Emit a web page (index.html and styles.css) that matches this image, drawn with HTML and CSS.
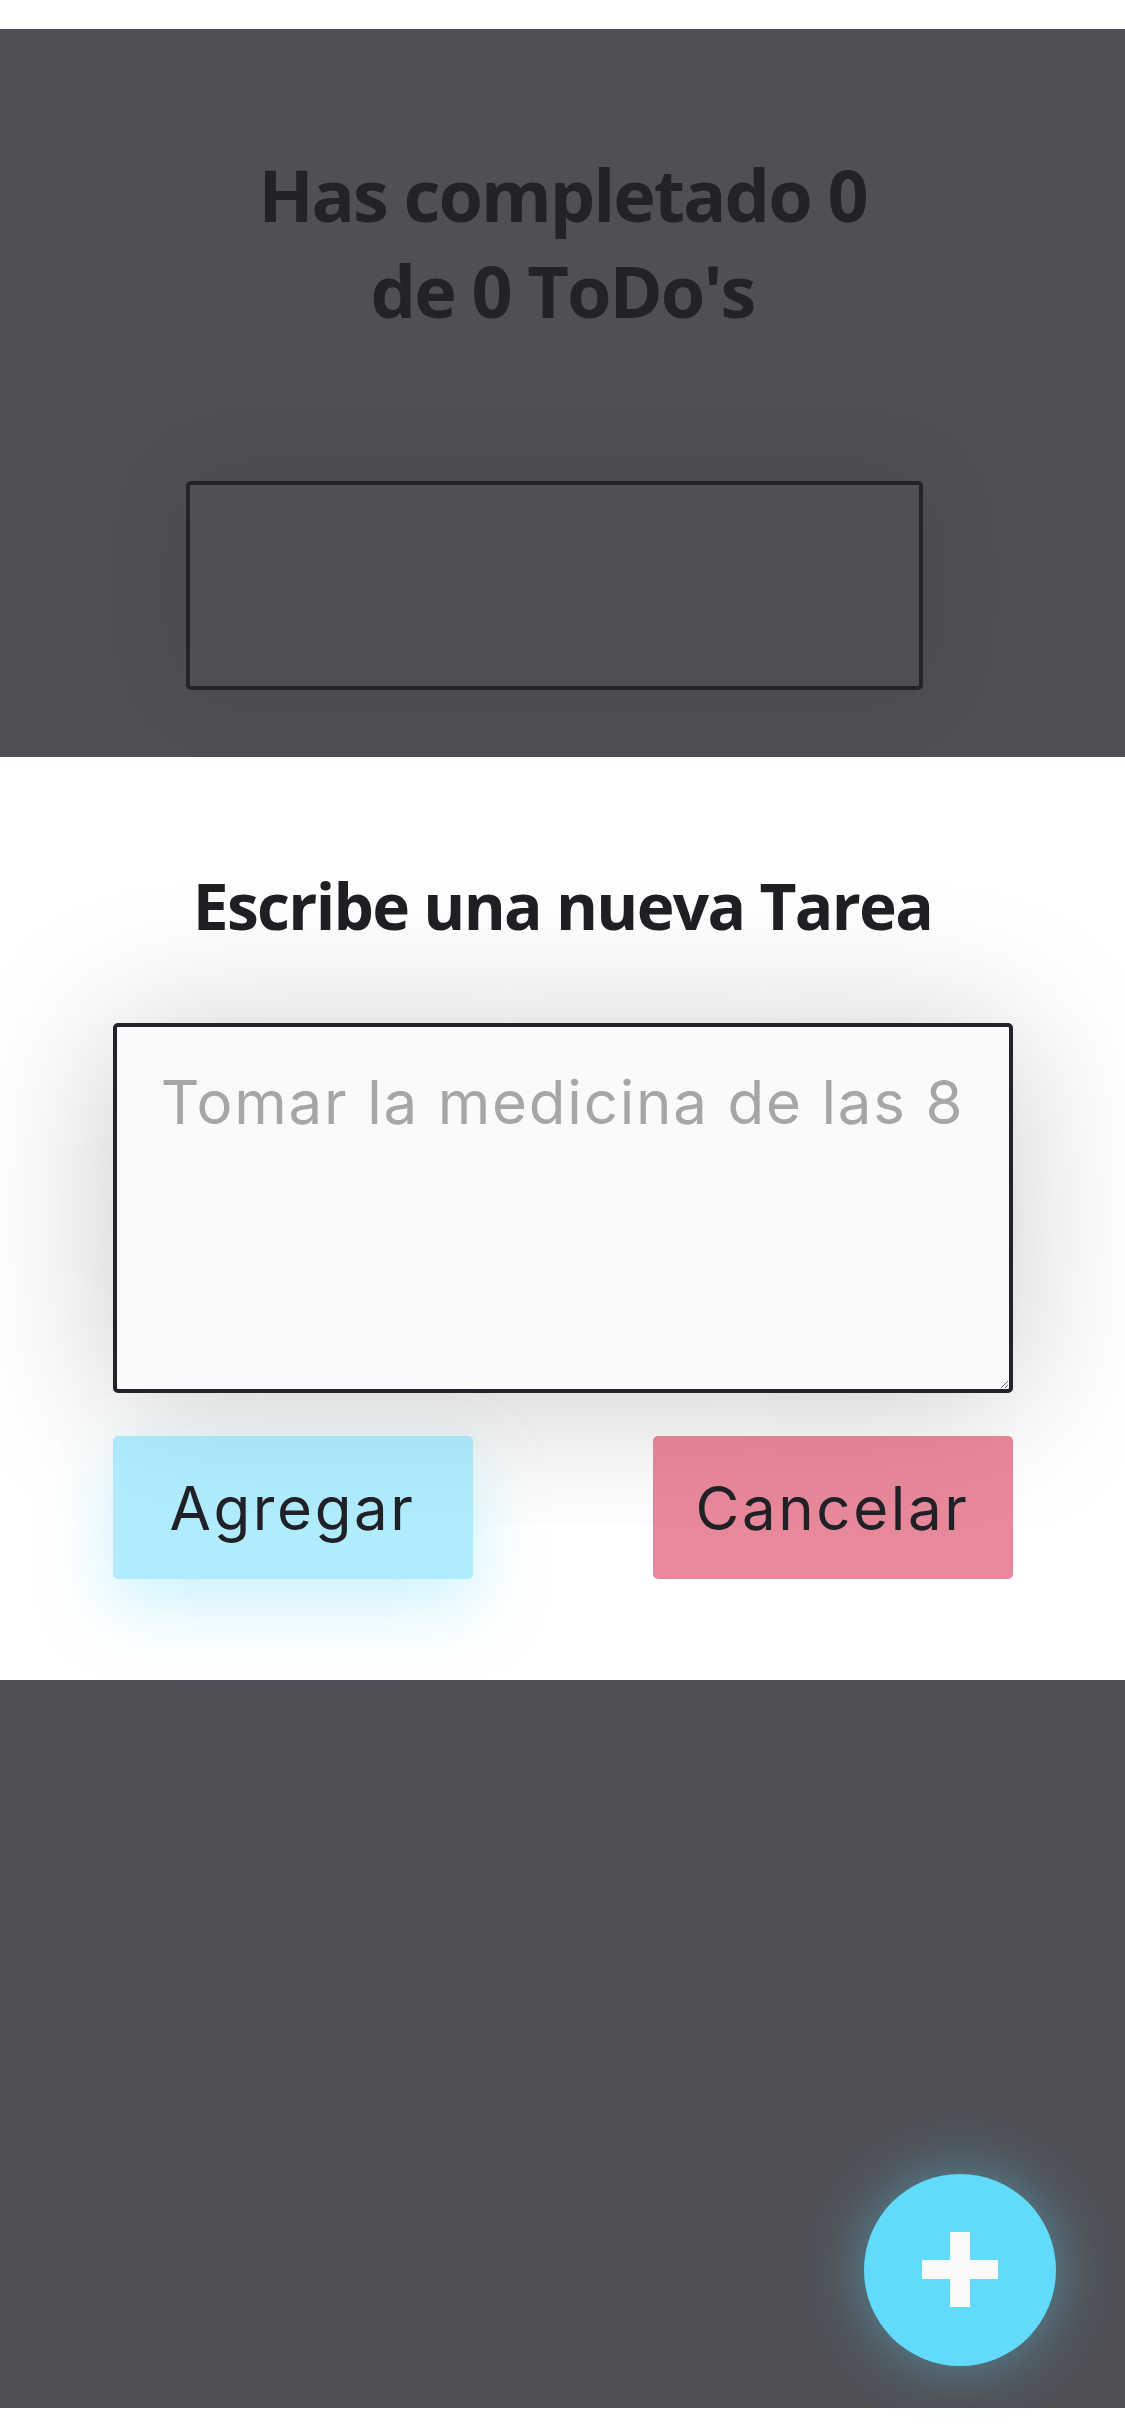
FILE: index.html
```html
<!DOCTYPE html>
<html lang="es">
<head>
<meta charset="utf-8">
<title>ToDo's</title>
<link rel="stylesheet" href="styles.css">
</head>
<body>
<div class="screen">
  <div class="strip"></div>
  <section class="backdrop backdrop-top">
    <h1 class="counter">Has completado 0<br>de 0 ToDo's</h1>
    <div class="search-box"></div>
  </section>
  <section class="modal">
    <h2 class="modal-title">Escribe una nueva Tarea</h2>
    <textarea class="task-input" placeholder="Tomar la medicina de las 8"></textarea>
    <div class="actions">
      <button class="btn btn-add" type="button">Agregar</button>
      <button class="btn btn-cancel" type="button">Cancelar</button>
    </div>
  </section>
  <section class="backdrop backdrop-bottom"></section>
  <div class="strip strip-bottom"></div>
  <button class="fab" type="button" aria-label="Agregar tarea">
    <svg width="76" height="76" viewBox="0 0 76 76"><rect x="28" y="0" width="20" height="75" fill="#fafafa"/><rect x="0" y="28" width="76" height="19" fill="#fafafa"/></svg>
  </button>
</div>
</body>
</html>
```
FILE: styles.css
```css
html, body {
  margin: 0;
  padding: 0;
  background: #ffffff;
}

.screen {
  position: relative;
  width: 1125px;
  height: 2436px;
  overflow: hidden;
}

.strip {
  height: 29px;
  background: #ffffff;
}

.strip-bottom {
  height: 28px;
}

.backdrop {
  background: #4f5056;
  box-sizing: border-box;
  height: 728px;
}

.backdrop-top {
  padding-top: 117px;
  display: flex;
  flex-direction: column;
}

.counter {
  margin: 0;
  font-family: "Open Sans", "Noto Sans", sans-serif;
  font-weight: 700;
  font-size: 72px;
  line-height: 96px;
  text-align: center;
  color: #222328;
  letter-spacing: -2px;
}

.search-box {
  margin-top: 143px;
  margin-left: 186px;
  width: 737px;
  height: 209px;
  box-sizing: border-box;
  border: 4px solid #232429;
  border-radius: 5px;
  box-shadow: 0 0 90px rgba(0, 0, 0, 0.10);
}

.modal {
  height: 923px;
  box-sizing: border-box;
  padding-top: 110px;
  background: #ffffff;
  display: flex;
  flex-direction: column;
  align-items: center;
}

.modal-title {
  margin: 0;
  font-family: "Open Sans", "Noto Sans", sans-serif;
  font-weight: 700;
  font-size: 64px;
  line-height: 77px;
  color: #1f2024;
  letter-spacing: -1.7px;
}

.task-input {
  margin-top: 79px;
  width: 900px;
  height: 370px;
  box-sizing: border-box;
  border: 4px solid #23242a;
  border-radius: 5px;
  background: #f9fafc;
  padding: 39px 10px 0;
  font-family: "Inter", "Liberation Sans", sans-serif;
  font-size: 60px;
  line-height: 72px;
  letter-spacing: 1.8px;
  text-align: center;
  color: #23242a;
  box-shadow: 0 10px 150px rgba(0, 0, 0, 0.22);
  outline: none;
}

.task-input::placeholder {
  color: #a6a6a6;
  opacity: 1;
}

.actions {
  margin-top: 43px;
  width: 900px;
  display: flex;
  justify-content: space-between;
}

.btn {
  width: 360px;
  height: 143px;
  border: none;
  border-radius: 5px;
  font-family: "Inter", "Liberation Sans", sans-serif;
  font-size: 60px;
  letter-spacing: 2.6px;
  color: #202127;
  padding: 0;
  cursor: pointer;
}

.btn-add {
  background: rgba(97, 218, 251, 0.5);
  box-shadow: 0 25px 70px rgba(97, 218, 251, 0.35);
}

.btn-cancel {
  background: rgba(213, 40, 72, 0.55);
}

.fab {
  position: absolute;
  left: 864px;
  top: 2174px;
  width: 192px;
  height: 192px;
  border-radius: 50%;
  border: none;
  padding: 0;
  background: #61dafb;
  box-shadow: 0 0 60px rgba(97, 218, 251, 0.45);
  display: flex;
  align-items: center;
  justify-content: center;
}

.fab svg {
  display: block;
}
```
